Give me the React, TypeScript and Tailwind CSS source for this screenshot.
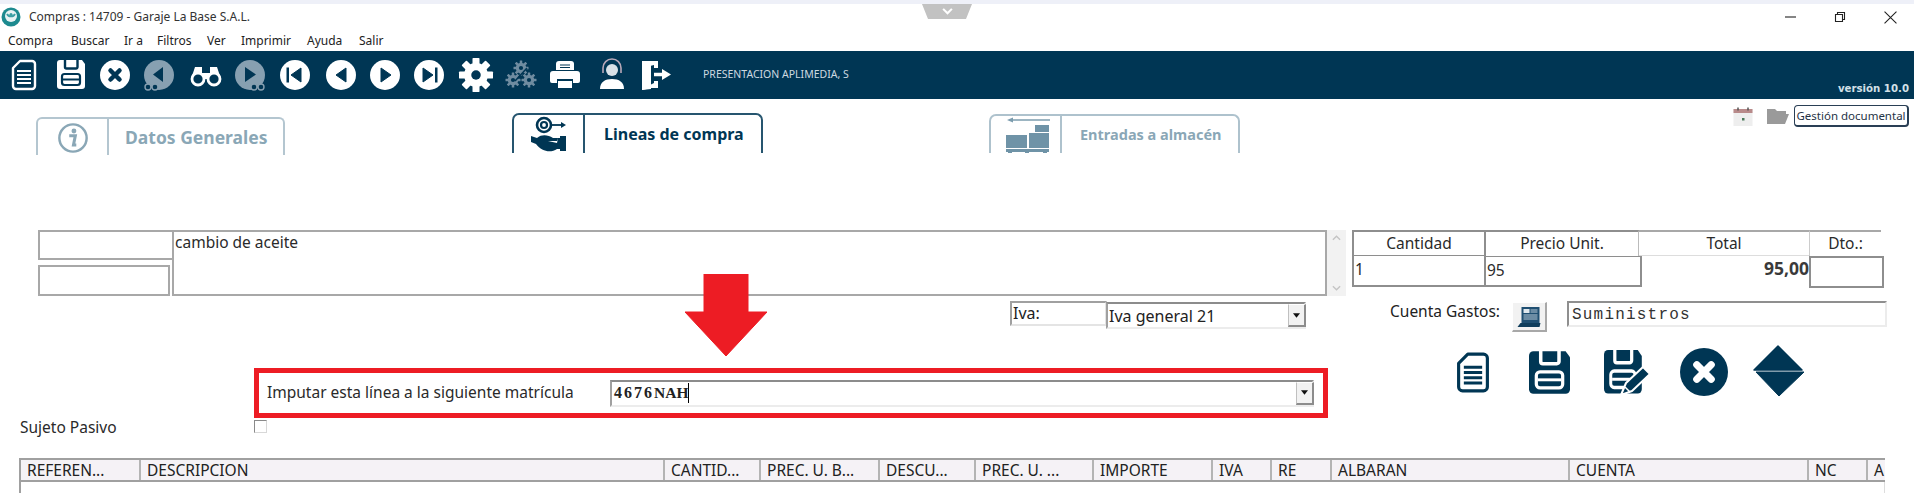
import React from "react";

const NAVY = "#003654";
const DIM = "#87a0b1";

type P = { className?: string };
const Box = ({ className = "", children, vb = "0 0 40 40" }: P & { children: React.ReactNode; vb?: string }) => (
  <svg viewBox={vb} className={`shrink-0 ${className}`}>{children}</svg>
);

const DocShape = ({ fg, bg }: { fg: string; bg: string }) => (
  <g>
    <path d="M16 6H28a3 3 0 0 1 3 3V31a3 3 0 0 1-3 3H12a3 3 0 0 1-3-3V13Z" fill={bg} stroke={fg} strokeWidth="2.4" strokeLinejoin="round" />
    <path d="M13 16H27M13 20H27M13 24H27M13 28H27" stroke={fg} strokeWidth="2.2" />
  </g>
);
const SaveShape = ({ fg, bg }: { fg: string; bg: string }) => (
  <g>
    <path d="M9 5H31L34 9V31a3 3 0 0 1-3 3H9a3 3 0 0 1-3-3V8a3 3 0 0 1 3-3Z" fill={fg} />
    <path d="M14 4V12a1.5 1.5 0 0 0 1.500 1.500H25A1.500 1.500 0 0 0 26.500 12V4" fill="none" stroke={bg} strokeWidth="2.400" />
    <rect x="11" y="19" width="18" height="11" rx="2.500" fill={fg} stroke={bg} strokeWidth="2.200" />
    <path d="M12 24.500H28" stroke={bg} strokeWidth="2" />
  </g>
);
const Cross = ({ fg, bg, r = 15 }: { fg: string; bg: string; r?: number }) => (
  <g>
    <circle cx="20" cy="20" r={r} fill={fg} />
    <path d={`M${20 - r * 0.3} ${20 - r * 0.3}L${20 + r * 0.3} ${20 + r * 0.3}M${20 + r * 0.3} ${20 - r * 0.3}L${20 - r * 0.3} ${20 + r * 0.3}`} stroke={bg} strokeWidth={r * 0.3} strokeLinecap="round" />
  </g>
);
const MiniBino = ({ x, y, c }: { x: number; y: number; c: string }) => (
  <g>
    <circle cx={x} cy={y} r="3" fill={NAVY} stroke={c} strokeWidth="1.400" />
    <circle cx={x + 7} cy={y} r="3" fill={NAVY} stroke={c} strokeWidth="1.400" />
  </g>
);
const Nav = ({ d, bar, className }: P & { d: string; bar?: number }) => (
  <Box className={className}>
    <circle cx="20" cy="20" r="15" fill="#fff" />
    <path d={d} fill={NAVY} stroke={NAVY} strokeLinejoin="round" strokeWidth="1" />
    {bar !== undefined && <rect x={bar} y="12.500" width="2.500" height="15" fill={NAVY} />}
  </Box>
);
const Gear = ({ cx, cy, r, c, hole, teeth = 4, w }: { cx: number; cy: number; r: number; c: string; hole: string; teeth?: number; w: number }) => (
  <g>
    {Array.from({ length: teeth }).map((_, i) => (
      <rect key={i} x={cx - w / 2} y={cy - r} width={w} height={r * 2} rx={w * 0.12} fill={c} transform={`rotate(${(i * 180) / teeth} ${cx} ${cy})`} />
    ))}
    <circle cx={cx} cy={cy} r={r * 0.7} fill={c} />
    <circle cx={cx} cy={cy} r={r * 0.28} fill={hole} />
  </g>
);

const Combo = ({ className = "", children }: P & { children?: React.ReactNode }) => (
  <div className={`flex items-stretch border-t-2 border-l-2 border-t-[#8c8c8c] border-l-[#a0a0a0] border-b-2 border-r-2 border-b-[#ececec] border-r-[#ececec] bg-white ${className}`}>
    <div className="flex-1 min-w-0 flex items-center">{children}</div>
    <div className="w-[18px] flex items-center justify-center bg-[#f2f2f2] border-l border-l-[#c0c0c0] border-r-2 border-r-[#8c8c8c] border-b-2 border-b-[#8c8c8c] border-t border-t-white -mr-[2px]">
      <svg viewBox="0 0 8 5" className="w-[7px] h-[5px]"><path d="M0 0H8L4 5Z" fill="#111" /></svg>
    </div>
  </div>
);

const cols = [
  { w: "w-[120px]", t: "REFEREN..." },
  { w: "w-[524px]", t: "DESCRIPCION" },
  { w: "w-[96px]", t: "CANTID..." },
  { w: "w-[119px]", t: "PREC. U. B..." },
  { w: "w-[96px]", t: "DESCU..." },
  { w: "w-[118px]", t: "PREC. U. ..." },
  { w: "w-[119px]", t: "IMPORTE" },
  { w: "w-[59px]", t: "IVA" },
  { w: "w-[60px]", t: "RE" },
  { w: "w-[238px]", t: "ALBARAN" },
  { w: "w-[239px]", t: "CUENTA" },
  { w: "w-[59px]", t: "NC" },
  { w: "w-[19px]", t: "A" },
];
const menu = [
  { t: "Compra", w: "w-[63px]" },
  { t: "Buscar", w: "w-[53px]" },
  { t: "Ir a", w: "w-[33px]" },
  { t: "Filtros", w: "w-[50px]" },
  { t: "Ver", w: "w-[34px]" },
  { t: "Imprimir", w: "w-[66px]" },
  { t: "Ayuda", w: "w-[52px]" },
  { t: "Salir", w: "w-[40px]" },
];

export default function App() {
  return (
    <div className="relative w-[1914px] h-[493px] overflow-hidden bg-white flex flex-col font-['Noto_Sans',sans-serif] text-[#222]">
      <div className="h-[4px] bg-[#eef0f8] shrink-0" />
      {/* pull-down handle */}
      <div className="absolute left-[922px] top-[4px] w-[50px] h-[15px] flex items-center justify-center bg-[#c2c2c2] [clip-path:polygon(0_0,100%_0,88%_100%,12%_100%)]">
        <svg viewBox="0 0 12 8" className="w-[11px] h-[7px]"><path d="M1 1L6 6L11 1" fill="none" stroke="#fff" strokeWidth="2.400" /></svg>
      </div>

      {/* title bar */}
      <div className="h-[26px] shrink-0 flex items-center">
        <svg viewBox="0 0 20 20" className="w-[20px] h-[20px] ml-[1px]">
          <circle cx="10" cy="10" r="9.500" fill="#1d8a8f" />
          <circle cx="10" cy="9" r="6" fill="#e9f3f4" />
          <path d="M6 7a4.500 4.500 0 0 0 8 0" fill="none" stroke="#3a9ea3" strokeWidth="1.800" />
          <circle cx="10" cy="7.500" r="1.600" fill="#3a9ea3" />
        </svg>
        <span className="ml-[8px] text-[12px] text-[#333]">Compras : 14709 - Garaje La Base S.A.L.</span>
        <div className="ml-auto flex items-center mr-[17px]">
          <svg viewBox="0 0 12 12" className="w-[12px] h-[12px]"><path d="M0 6H11" stroke="#222" strokeWidth="1.100" /></svg>
          <svg viewBox="0 0 12 12" className="w-[12px] h-[12px] ml-[37px]"><path d="M1.500 3.500H8.500V10.500H1.500ZM3.500 3.500V1.500H10.500V8.500H8.500" fill="none" stroke="#222" strokeWidth="1.100" /></svg>
          <svg viewBox="0 0 12 12" className="w-[13px] h-[13px] ml-[38px]"><path d="M0.500 0.500L11.500 11.500M11.500 0.500L0.500 11.500" stroke="#222" strokeWidth="1" /></svg>
        </div>
      </div>

      {/* menu */}
      <div className="h-[21px] shrink-0 flex items-center pl-[8px] text-[12px] text-[#222]">
        {menu.map((m) => (
          <span key={m.t} className={m.w}>{m.t}</span>
        ))}
      </div>

      {/* toolbar */}
      <div className="h-[48px] shrink-0 bg-[#003654] flex items-center pl-[4px]">
        <Box className="w-[40px] h-[40px]"><DocShape fg="#fff" bg={NAVY} /></Box>
        <Box className="w-[40px] h-[40px] ml-[7px]"><SaveShape fg="#fff" bg={NAVY} /></Box>
        <Box className="w-[40px] h-[40px] ml-[4px]"><Cross fg="#fff" bg={NAVY} /></Box>
        <Box className="w-[40px] h-[40px] ml-[4px]">
          <circle cx="20" cy="20" r="15" fill={DIM} />
          <path d="M24 12V27L14 19.500Z" fill={NAVY} />
          <MiniBino x={9} y={32} c={DIM} />
        </Box>
        <Box className="w-[40px] h-[40px] ml-[7px]">
          <path d="M9 12h7v6h8v-6h7l4 12H5Z" fill="#fff" />
          <circle cx="12" cy="24" r="6" fill={NAVY} stroke="#fff" strokeWidth="2.800" />
          <circle cx="28" cy="24" r="6" fill={NAVY} stroke="#fff" strokeWidth="2.800" />
          <path d="M18 23h4" stroke="#fff" strokeWidth="2" />
        </Box>
        <Box className="w-[40px] h-[40px] ml-[4px]">
          <circle cx="20" cy="20" r="15" fill={DIM} />
          <path d="M15 12V27L26 19.500Z" fill={NAVY} />
          <MiniBino x={24} y={32} c={DIM} />
        </Box>
        <Nav className="w-[40px] h-[40px] ml-[5px]" d="M26 13V27L16 20Z" bar={11.500} />
        <Nav className="w-[40px] h-[40px] ml-[6px]" d="M25 13V27L15 20Z" />
        <Nav className="w-[40px] h-[40px] ml-[4px]" d="M16 13V27L26 20Z" />
        <Nav className="w-[40px] h-[40px] ml-[4px]" d="M14 13V27L24 20Z" bar={26} />
        <Box className="w-[40px] h-[40px] ml-[7px]"><Gear cx={20} cy={20} r={17} c="#fff" hole={NAVY} w={7} /></Box>
        <Box className="w-[40px] h-[40px] ml-[5px]">
          <Gear cx={20} cy={13} r={7.500} c="#6f8ca0" hole={NAVY} w={2.500} />
          <Gear cx={12} cy={25} r={7.500} c="#6f8ca0" hole={NAVY} w={2.500} />
          <Gear cx={28} cy={25} r={7.500} c="#6f8ca0" hole={NAVY} w={2.500} />
          <path d="M14 26L26 13" stroke={NAVY} strokeWidth="1.500" />
        </Box>
        <Box className="w-[40px] h-[40px] ml-[4px]">
          <path d="M11 15V9a3 3 0 0 1 3-3H26a3 3 0 0 1 3 3V15Z" fill="#fff" />
          <path d="M15 10H25M15 12.500H25" stroke={NAVY} strokeWidth="1.200" />
          <path d="M5 19a3 3 0 0 1 3-3H32a3 3 0 0 1 3 3V26a2 2 0 0 1-2 2H28V24H12V28H7a2 2 0 0 1-2-2Z" fill="#fff" />
          <path d="M13 26H27V33H13Z" fill="#fff" />
        </Box>
        <Box className="w-[40px] h-[40px] ml-[7px]">
          <circle cx="20" cy="15" r="6" fill="#d9e2e8" />
          <path d="M11 18V13a9 9 0 0 1 18 0V18" fill="none" stroke="#b8a8b8" strokeWidth="1.600" />
          <path d="M8 34c0-7 5-10 12-10s12 3 12 10Z" fill="#fff" />
        </Box>
        <Box className="w-[40px] h-[40px] ml-[4px]">
          <path d="M6 6H22V13H18V10L14 11V30L18 28V26H22V33H15L6 35Z" fill="#fff" />
          <path d="M6 6L15 10V34L6 35Z" fill="#fff" />
          <path d="M18 19.500H27" stroke="#fff" strokeWidth="3.500" />
          <path d="M26 14L35 19.500L26 25Z" fill="#fff" />
        </Box>
        <span className="ml-[27px] text-[10.500px] text-[#cdd9e0] whitespace-nowrap">PRESENTACION APLIMEDIA, S</span>
        <span className="ml-auto self-end mb-[3px] mr-[5px] text-[10.200px] font-bold text-[#d3e0e8] font-['DejaVu_Sans',sans-serif] whitespace-nowrap">versión 10.0</span>
      </div>

      {/* tabs */}
      <div className="h-[131px] shrink-0 flex items-start">
        <div className="ml-[36px] mt-[18px] w-[249px] h-[38px] flex border-t-2 border-x-2 border-[#b4c6d0] rounded-t-[6px]">
          <div className="w-[71px] h-full flex items-center justify-center border-r-2 border-[#b4c6d0]">
            <svg viewBox="0 0 34 34" className="w-[32px] h-[32px] mt-[2px]">
              <circle cx="17" cy="17" r="14.500" fill="none" stroke="#8aa7b6" strokeWidth="2.600" />
              <circle cx="18" cy="9.500" r="2.600" fill="#8aa7b6" />
              <path d="M13 14.500H19.500L17.500 24.500H20.500" fill="none" stroke="#8aa7b6" strokeWidth="3.200" />
            </svg>
          </div>
          <span className="ml-[16px] self-center text-[17.500px] font-bold text-[#8aa7b6] whitespace-nowrap">Datos Generales</span>
        </div>

        <div className="ml-[227px] mt-[14px] w-[251px] h-[40px] flex border-t-2 border-x-2 border-[#26556f] rounded-t-[7px]">
          <div className="w-[71px] h-full flex items-center justify-center border-r-2 border-[#26556f]">
            <svg viewBox="0 0 42 40" className="w-[42px] h-[40px]">
              <circle cx="16" cy="11" r="7" fill="none" stroke={NAVY} strokeWidth="2.600" />
              <circle cx="16" cy="11" r="3" fill="none" stroke={NAVY} strokeWidth="2.200" />
              <path d="M22 11H35" stroke={NAVY} strokeWidth="1.800" />
              <path d="M33 8L38 11L33 14Z" fill={NAVY} />
              <path d="M3 22L9 24C14 20 20 21 25 24H30L29 27H20L29 29L30 24H32V35H29C23 39 14 38 8 30L3 28Z" fill={NAVY} />
              <rect x="32" y="22" width="6" height="15" fill={NAVY} />
            </svg>
          </div>
          <span className="ml-[19px] self-center text-[16px] font-bold text-[#003654] whitespace-nowrap">Lineas de compra</span>
        </div>

        <div className="ml-[226px] mt-[15px] w-[251px] h-[39px] flex border-t-2 border-x-2 border-[#aec2cd] rounded-t-[7px]">
          <div className="w-[71px] h-full border-r-2 border-[#aec2cd] overflow-hidden">
            <svg viewBox="0 0 71 39" className="w-[71px] h-[39px]">
              <path d="M21 4H59" stroke="#7b9cae" strokeWidth="1.500" />
              <path d="M16 4L22 1.500V6.500Z" fill="#7b9cae" />
              <rect x="15" y="19" width="21" height="13" fill="#6f93a7" />
              <rect x="38" y="17" width="20" height="15" fill="#6f93a7" />
              <rect x="44" y="9" width="14" height="7" fill="#6f93a7" />
              <rect x="15" y="33" width="43" height="3" fill="#6f93a7" />
              <path d="M17 36h4v3h-4zM34 36h4v3h-4zM52 36h4v3h-4z" fill="#6f93a7" />
            </svg>
          </div>
          <span className="ml-[18px] self-center text-[14.500px] font-bold text-[#8aa7b6] whitespace-nowrap">Entradas a almacén</span>
        </div>

        <div className="ml-auto mr-[5px] mt-[6px] flex items-center">
          <svg viewBox="0 0 20 19" className="w-[20px] h-[19px]">
            <rect x="0.500" y="2" width="19" height="17" fill="#eeeeee" />
            <rect x="0.500" y="2" width="19" height="4" fill="#b88a8a" />
            <path d="M5 0.500V3.500M15 0.500V3.500" stroke="#555" strokeWidth="1.500" />
            <rect x="9" y="11" width="2.500" height="2.500" fill="#4a7a5a" />
          </svg>
          <svg viewBox="0 0 22 17" className="w-[22px] h-[17px] ml-[14px]">
            <path d="M0 1H8L10 3H19V6H5L0 16ZM0 16L4 6H22L18 16Z" fill="#9a9a9a" />
          </svg>
          <div className="ml-[5px] w-[115px] h-[22px] flex items-center justify-center rounded-[4px] border border-[#2a3f55] border-b-2 border-r-2 bg-white text-[11.500px] text-[#1f3346] whitespace-nowrap">Gestión documental</div>
        </div>
      </div>

      {/* description row */}
      <div className="h-[66px] shrink-0 flex items-start">
        <div className="ml-[38px] w-[134px] h-[66px] flex flex-col">
          <div className="h-[30px] border-2 border-r-0 border-[#a8a8a8]" />
          <div className="mt-[5px] h-[31px] mr-[2px] border-2 border-[#a8a8a8]" />
        </div>
        <div className="w-[1155px] h-[66px] border-2 border-[#a8a8a8] pl-[1px] text-[15.500px] leading-[21px] text-[#2a2a2a]">cambio de aceite</div>
        <div className="w-[19px] h-[66px] bg-[#f2f2f2] flex flex-col items-center justify-between py-[5px]">
          <svg viewBox="0 0 10 6" className="w-[9px] h-[6px]"><path d="M1 5L5 1L9 5" fill="none" stroke="#c4c4c4" strokeWidth="1.500" /></svg>
          <svg viewBox="0 0 10 6" className="w-[9px] h-[6px]"><path d="M1 1L5 5L9 1" fill="none" stroke="#c4c4c4" strokeWidth="1.500" /></svg>
        </div>
        <div className="ml-[6px] w-[532px] text-[15.500px] text-[#2a2a2a]">
          <div className="flex h-[26px] items-stretch">
            <div className="w-[134px] border-2 border-b border-[#8e8e8e] flex items-center justify-center">Cantidad</div>
            <div className="w-[153px] border-t-2 border-r border-t-[#8e8e8e] border-r-[#bbbbbb] flex items-center justify-center">Precio Unit.</div>
            <div className="w-[170px] border-t-2 border-t-[#a8a8a8] border-b border-b-[#dddddd] flex items-center justify-center">Total</div>
            <div className="w-[72px] border-t-2 border-l border-t-[#a8a8a8] border-l-[#cccccc] flex items-center justify-center">Dto.:</div>
          </div>
          <div className="flex h-[32px] items-start">
            <div className="w-[134px] h-[31px] border-2 border-t-0 border-[#8e8e8e] pl-[1px] leading-[27px]">1</div>
            <div className="w-[156px] h-[31px] border-2 border-l-0 border-t border-[#8e8e8e] leading-[27px] pl-[1px]">95</div>
            <div className="w-[167px] h-[31px] text-right text-[17.500px] font-bold text-[#3a3a3a] leading-[24px]">95,00</div>
            <div className="w-[75px] h-[32px] border-2 border-[#8e8e8e]" />
          </div>
        </div>
      </div>

      {/* iva / cuenta */}
      <div className="h-[44px] mt-[5px] shrink-0 flex items-start">
        <div className="ml-[1010px] w-[97px] h-[25px] border-2 border-[#a0a0a0] border-b-[#e4e4e4] border-r-[#e4e4e4] text-[16px] leading-[20px] pl-[1px]">Iva:</div>
        <Combo className="w-[200px] h-[27px] -ml-[1px] mt-[1px]">
          <span className="text-[16px] pl-[1px] leading-[20px]">Iva general 21</span>
        </Combo>
        <span className="ml-[84px] w-[122px] text-[15.500px] leading-[20px] whitespace-nowrap">Cuenta Gastos:</span>
        <div className="w-[35px] h-[30px] mt-[1px] flex items-center justify-center bg-[#f2f2f2] border-t border-l border-t-white border-l-white border-r-2 border-b-2 border-r-[#a8a8a8] border-b-[#a8a8a8]">
          <svg viewBox="0 0 24 22" className="w-[25px] h-[22px]">
            <rect x="4" y="1" width="18" height="17" fill="#1f4f72" />
            <rect x="6" y="3" width="6" height="4" fill="#dfe8ee" />
            <path d="M13 4H20M13 6H20M6 9H20M6 11H20M6 13H20" stroke="#b9cad6" strokeWidth="1" />
            <path d="M0 21L3 17H23L22 21Z" fill="#0f3d5c" />
          </svg>
        </div>
        <div className="ml-[20px] w-[320px] h-[26px] border-2 border-[#8f8f8f] border-r-[#ececec] border-b-[#ececec] font-['Liberation_Mono',monospace] text-[16px] tracking-[1.200px] leading-[24px] pl-[3px] text-[#333]">Suministros</div>
      </div>

      {/* matricula + actions */}
      <div className="h-[73px] shrink-0 flex items-start">
        <div className="ml-[254px] mt-[23px] w-[1074px] h-[50px] border-[5px] border-[#ed1c24] flex items-center pl-[8px]">
          <span className="w-[343px] text-[15.500px] text-[#2a2a2a] whitespace-nowrap">Imputar esta línea a la siguiente matrícula</span>
          <Combo className="w-[704px] h-[27px]">
            <span className="font-['Liberation_Serif',serif] font-bold text-[16px] tracking-[2px] pl-[2px] text-[#222] border-r border-r-black leading-[20px]">4676<span className="text-[15.500px] tracking-[0px]">NAH</span></span>
          </Combo>
        </div>
        <div className="ml-[128px] flex items-start">
          <Box vb="7 4 26 32" className="w-[34px] h-[45px] mt-[5px]"><DocShape fg={NAVY} bg="#fff" /></Box>
          <Box vb="6 5 28 29" className="w-[41px] h-[45px] ml-[39px] mt-[5px]"><SaveShape fg={NAVY} bg="#fff" /></Box>
          <Box vb="0 0 48 48" className="w-[48px] h-[48px] ml-[34px] mt-[5px]">
            <g transform="translate(0 0) scale(1.350 1.500) translate(-6 -5)"><SaveShape fg={NAVY} bg="#fff" /></g>
            <path d="M17 45L22 33L39 17L46 24L28 41Z" fill={NAVY} stroke="#fff" strokeWidth="2" strokeLinejoin="round" />
            <path d="M21 37L26 42" stroke="#fff" strokeWidth="1.500" />
          </Box>
          <Box vb="5 5 30 30" className="w-[48px] h-[48px] ml-[28px] mt-[3px]"><Cross fg={NAVY} bg="#fff" /></Box>
          <svg viewBox="0 0 53 52" className="w-[53px] h-[52px] ml-[24px]">
            <path d="M26 1L50 25H2Z" fill={NAVY} stroke={NAVY} strokeWidth="1.500" strokeLinejoin="round" />
            <path d="M4 27H52L27 51Z" fill={NAVY} stroke={NAVY} strokeWidth="1" strokeLinejoin="round" />
          </svg>
        </div>
      </div>

      {/* sujeto pasivo */}
      <div className="h-[40px] shrink-0 flex items-start">
        <span className="ml-[20px] w-[234px] text-[15.500px] leading-[20px] mt-[-1px] text-[#2a2a2a]">Sujeto Pasivo</span>
        <div className="w-[13px] h-[13px] mt-[2px] border border-[#8a8a8a] border-r-[#d8d8d8] border-b-[#d8d8d8]" />
      </div>

      {/* grid */}
      <div className="ml-[19px] w-[1866px] flex-1 flex flex-col overflow-hidden">
        <div className="h-[24px] shrink-0 flex bg-[#f5f2f6] border-t-2 border-b-2 border-l-2 border-t-[#a0a0a0] border-b-[#a0a0a0] border-l-[#a0a0a0] text-[15.500px] text-[#222]">
          {cols.map((c) => (
            <div key={c.t} className={`${c.w} shrink-0 overflow-hidden whitespace-nowrap pl-[6px] leading-[20px] border-r-2 border-r-[#b4b4b4] last:border-r-0`}>{c.t}</div>
          ))}
        </div>
        <div className="flex-1 border-l-2 border-r border-l-[#a0a0a0] border-r-[#dddddd]" />
      </div>

      {/* arrow overlay */}
      <svg viewBox="0 0 82 82" className="absolute left-[685px] top-[274px] w-[82px] h-[82px]">
        <path d="M19 0H63V38H82L41 82L0 38H19Z" fill="#ed1c24" stroke="#ed1c24" strokeWidth="1" strokeLinejoin="round" />
      </svg>
    </div>
  );
}
